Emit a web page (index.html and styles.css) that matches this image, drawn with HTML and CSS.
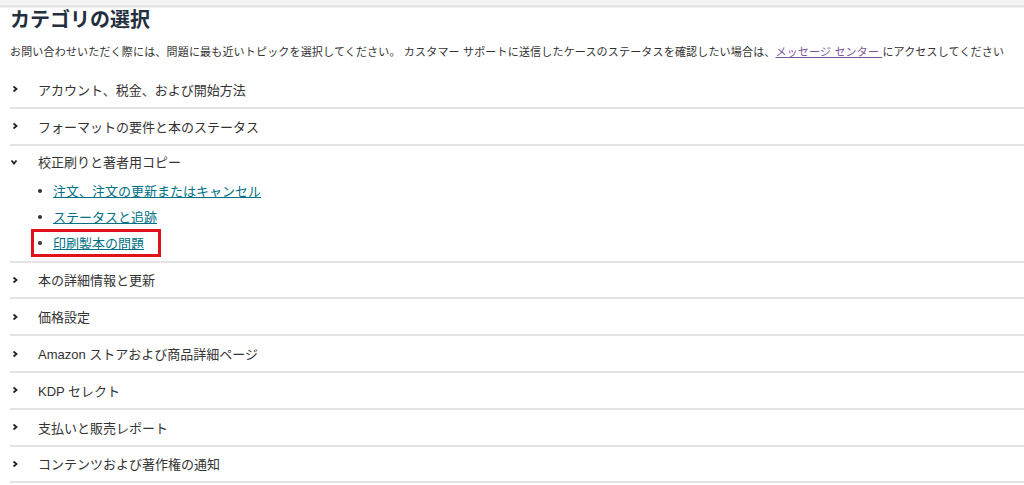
FILE: index.html
```html
<!DOCTYPE html>
<html lang="ja">
<head>
    <meta charset="UTF-8">
    <meta name="viewport" content="width=device-width, initial-scale=1.0">
    <title>カテゴリの選択</title>
    <link rel="stylesheet" href="styles.css">
</head>
<body>
    <div class="topbar"></div>

    <h1 class="title">カテゴリの選択</h1>
    <p class="intro">お問い合わせいただく際には、問題に最も近いトピックを選択してください。 カスタマー サポートに送信したケースのステータスを確認したい場合は、<a href="#" class="visited">メッセージ センター </a>にアクセスしてください</p>

    <ul class="categories">
        <li class="cat">
            <div class="cat-head">
                <svg class="chev" width="8" height="8" viewBox="0 0 8 8"><polyline points="2.5,1.5 5.5,4 2.5,6.5"/></svg>
                <span>アカウント、税金、および開始方法</span>
            </div>
        </li>
        <li class="cat">
            <div class="cat-head">
                <svg class="chev" width="8" height="8" viewBox="0 0 8 8"><polyline points="2.5,1.5 5.5,4 2.5,6.5"/></svg>
                <span>フォーマットの要件と本のステータス</span>
            </div>
        </li>
        <li class="cat open">
            <div class="cat-head">
                <svg class="chev" width="8" height="8" viewBox="0 0 8 8"><polyline points="1.5,2.5 4,5.5 6.5,2.5"/></svg>
                <span>校正刷りと著者用コピー</span>
            </div>
            <ul class="topics">
                <li><a href="#">注文、注文の更新またはキャンセル</a></li>
                <li><a href="#">ステータスと追跡</a></li>
                <li class="marked"><a href="#">印刷製本の問題</a></li>
            </ul>
        </li>
        <li class="cat">
            <div class="cat-head">
                <svg class="chev" width="8" height="8" viewBox="0 0 8 8"><polyline points="2.5,1.5 5.5,4 2.5,6.5"/></svg>
                <span>本の詳細情報と更新</span>
            </div>
        </li>
        <li class="cat">
            <div class="cat-head">
                <svg class="chev" width="8" height="8" viewBox="0 0 8 8"><polyline points="2.5,1.5 5.5,4 2.5,6.5"/></svg>
                <span>価格設定</span>
            </div>
        </li>
        <li class="cat">
            <div class="cat-head">
                <svg class="chev" width="8" height="8" viewBox="0 0 8 8"><polyline points="2.5,1.5 5.5,4 2.5,6.5"/></svg>
                <span>Amazon ストアおよび商品詳細ページ</span>
            </div>
        </li>
        <li class="cat">
            <div class="cat-head">
                <svg class="chev" width="8" height="8" viewBox="0 0 8 8"><polyline points="2.5,1.5 5.5,4 2.5,6.5"/></svg>
                <span>KDP セレクト</span>
            </div>
        </li>
        <li class="cat">
            <div class="cat-head">
                <svg class="chev" width="8" height="8" viewBox="0 0 8 8"><polyline points="2.5,1.5 5.5,4 2.5,6.5"/></svg>
                <span>支払いと販売レポート</span>
            </div>
        </li>
        <li class="cat">
            <div class="cat-head">
                <svg class="chev" width="8" height="8" viewBox="0 0 8 8"><polyline points="2.5,1.5 5.5,4 2.5,6.5"/></svg>
                <span>コンテンツおよび著作権の通知</span>
            </div>
        </li>
    </ul>
</body>
</html>
```

FILE: styles.css
```css
body {
    margin: 0;
    font-family: "Liberation Sans", "Noto Sans CJK JP", sans-serif;
    color: #333;
    background: #fff;
}
.topbar {
    height: 8px;
    background: linear-gradient(to bottom, #f4f4f4 0, #f4f4f4 5px, #dcdcdc 6px, #e4e4e4 7px, #fff 8px);
}
.title {
    margin: 0;
    padding-left: 10px;
    font-size: 20px;
    line-height: 24px;
    font-weight: bold;
    color: #232f3e;
}
.intro {
    margin: 11px 0 0;
    padding-left: 10px;
    font-size: 11px;
    line-height: 18px;
    letter-spacing: 0.18px;
    white-space: nowrap;
    color: #333;
}
.intro .visited {
    color: #7a5699;
    text-decoration: underline;
}
.categories {
    list-style: none;
    margin: 11px 0 0 10px;
    padding: 0;
}
.cat {
    border-bottom: 2px solid #e4e4e4;
}
.cat-head {
    display: flex;
    align-items: center;
    height: 34.8px;
    font-size: 13px;
    color: #333;
}
.chev {
    margin-left: 1px;
    margin-right: 19px;
    fill: none;
    stroke: #222;
    stroke-width: 1.8;
}
.open .cat-head {
    height: 32px;
}
.open .chev {
    margin-left: 0;
    margin-right: 20px;
}
.topics {
    list-style: none;
    margin: 0 0 5px 22px;
    padding: 0;
}
.topics li {
    display: flex;
    align-items: center;
    width: fit-content;
    height: 26px;
    padding: 0 4px 0 6px;
    font-size: 13px;
    box-sizing: border-box;
}
.topics li::before {
    content: "";
    width: 4px;
    height: 4px;
    border-radius: 50%;
    background: #333;
    margin-right: 11px;
}
.topics a {
    color: #007185;
    text-decoration: underline;
}
.topics .marked {
    padding-right: 16px;
    outline: 3px solid #e0111b;
    outline-offset: -2px;
}
```
